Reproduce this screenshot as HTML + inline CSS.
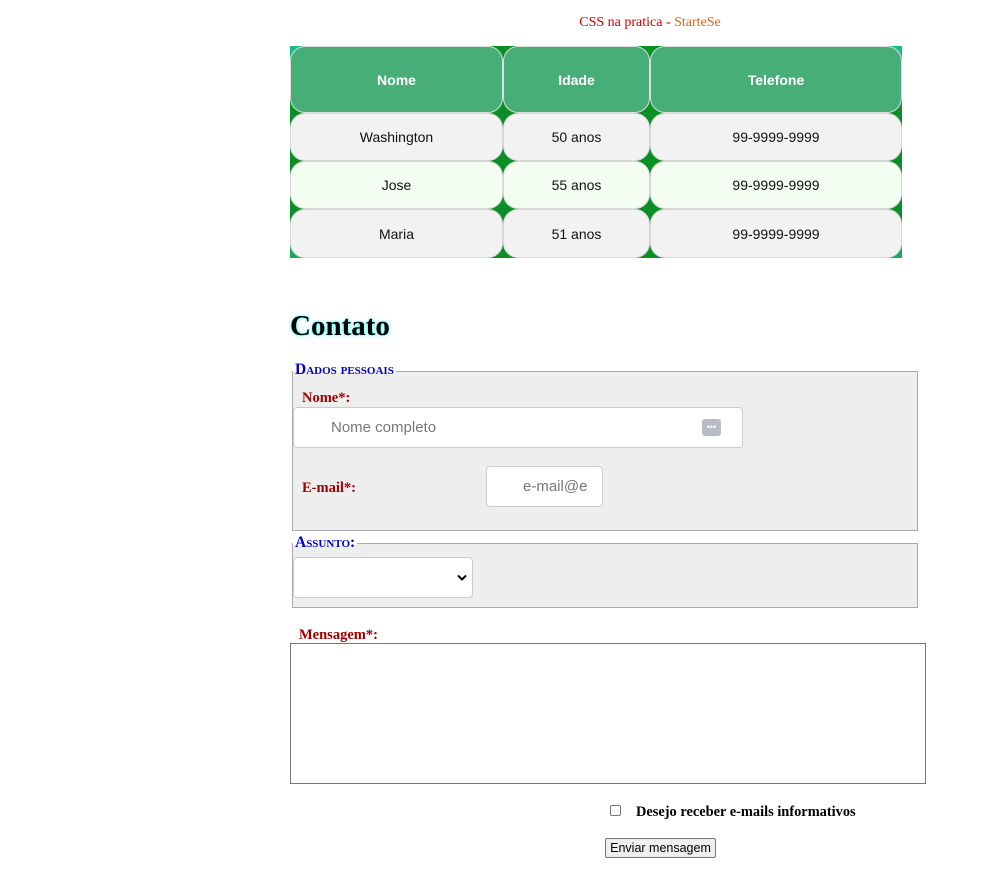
<!DOCTYPE html>
<html><head><meta charset="utf-8"><style>
*{box-sizing:border-box}
body{margin:0;width:1005px;height:871px;background:#fff;font-family:"Liberation Serif",serif;position:relative;overflow:hidden}
.a{position:absolute}
.title{left:0;width:1300px;top:15px;text-align:center;font-size:14px;color:#c00}
.title span{color:#d2691e}
.tbl{left:290px;top:46px;width:612px;height:212px;background:#0a8f25;overflow:hidden}
.c{position:absolute;border:1px solid #d8d8d8;border-radius:15px;display:flex;align-items:center;justify-content:center;font-family:"Liberation Sans",sans-serif;font-size:14px;color:#111}
.h{background:#46ae76;color:#fff;font-weight:bold;border-color:#ddd}
.r1,.r3{background:#f2f2f2}
.r2{background:#f3fdf2}
.lbl{color:#900;font-weight:bold;font-size:14.5px}
.fs{border:1px solid #aaa;background:#eee}
.leg{color:#00c;font-weight:bold;font-variant:small-caps;font-size:15.5px;background:linear-gradient(#fff 0,#fff 60%,#eee 60%);padding:0 2px}
.inp{background:#fff;border:1px solid #ccc;border-radius:4px;font-family:"Liberation Sans",sans-serif;font-size:15px;color:#777}
</style></head><body>
<div class="a title">CSS na pratica - <span>StarteSe</span></div>
<div class="a tbl">
<div class="a" style="left:0;top:0;width:14px;height:14px;background:#1abc8c"></div>
<div class="a" style="right:0;top:0;width:14px;height:14px;background:#1abc8c"></div>
<div class="a" style="left:0;bottom:0;width:14px;height:14px;background:#1aaa5a"></div>
<div class="a" style="right:0;bottom:0;width:14px;height:14px;background:#1aaa5a"></div>
<div class="c h" style="left:0;top:0;width:213px;height:67px">Nome</div>
<div class="c h" style="left:213px;top:0;width:147px;height:67px">Idade</div>
<div class="c h" style="left:360px;top:0;width:252px;height:67px">Telefone</div>
<div class="c r1" style="left:0;top:67px;width:213px;height:48px">Washington</div>
<div class="c r1" style="left:213px;top:67px;width:147px;height:48px">50 anos</div>
<div class="c r1" style="left:360px;top:67px;width:252px;height:48px">99-9999-9999</div>
<div class="c r2" style="left:0;top:115px;width:213px;height:48px">Jose</div>
<div class="c r2" style="left:213px;top:115px;width:147px;height:48px">55 anos</div>
<div class="c r2" style="left:360px;top:115px;width:252px;height:48px">99-9999-9999</div>
<div class="c r3" style="left:0;top:163px;width:213px;height:49px">Maria</div>
<div class="c r3" style="left:213px;top:163px;width:147px;height:49px">51 anos</div>
<div class="c r3" style="left:360px;top:163px;width:252px;height:49px">99-9999-9999</div>
</div>
<div class="a" style="left:290px;top:310px;font-size:29px;font-weight:bold;text-shadow:0 0 3px #0ff">Contato</div>
<div class="a fs" style="left:292px;top:371px;width:626px;height:160px"></div>
<div class="a leg" style="left:293px;top:361px">Dados pessoais</div>
<div class="a lbl" style="left:302px;top:390px">Nome*:</div>
<div class="a inp" style="left:293px;top:407px;width:450px;height:41px;padding:11px 0 0 37px">Nome completo
<div class="a" style="left:408px;top:11px;width:19px;height:17px;background:#b8bcc4;border-radius:3px;color:#fff;font-size:9px;line-height:17px;text-align:center">•••</div></div>
<div class="a lbl" style="left:302px;top:480px">E-mail*:</div>
<div class="a inp" style="left:486px;top:466px;width:117px;height:41px;padding:11px 0 0 36px;overflow:hidden;white-space:nowrap">e-mail@e</div>
<div class="a fs" style="left:292px;top:543px;width:626px;height:65px"></div>
<div class="a leg" style="left:293px;top:534px">Assunto:</div>
<div class="a inp" style="left:293px;top:557px;width:180px;height:41px"><svg class="a" style="left:163px;top:16px" width="10" height="8" viewBox="0 0 10 8"><path d="M1 1.5L5 5.5L9 1.5" stroke="#000" stroke-width="2" fill="none"/></svg></div>
<div class="a lbl" style="left:299px;top:627px">Mensagem*:</div>
<div class="a" style="left:290px;top:643px;width:636px;height:141px;border:1px solid #777"></div>
<div class="a" style="left:610px;top:805px;width:11px;height:11px;border:1px solid #777;border-radius:2px"></div>
<div class="a" style="left:636px;top:804px;font-weight:bold;font-size:14.4px">Desejo receber e-mails informativos</div>
<div class="a" style="left:605px;top:838px;width:111px;height:20px;border:1px solid #777;background:#efefef;border-radius:2px;font-family:'Liberation Sans',sans-serif;font-size:12.5px;text-align:center;line-height:18px">Enviar mensagem</div>
</body></html>
